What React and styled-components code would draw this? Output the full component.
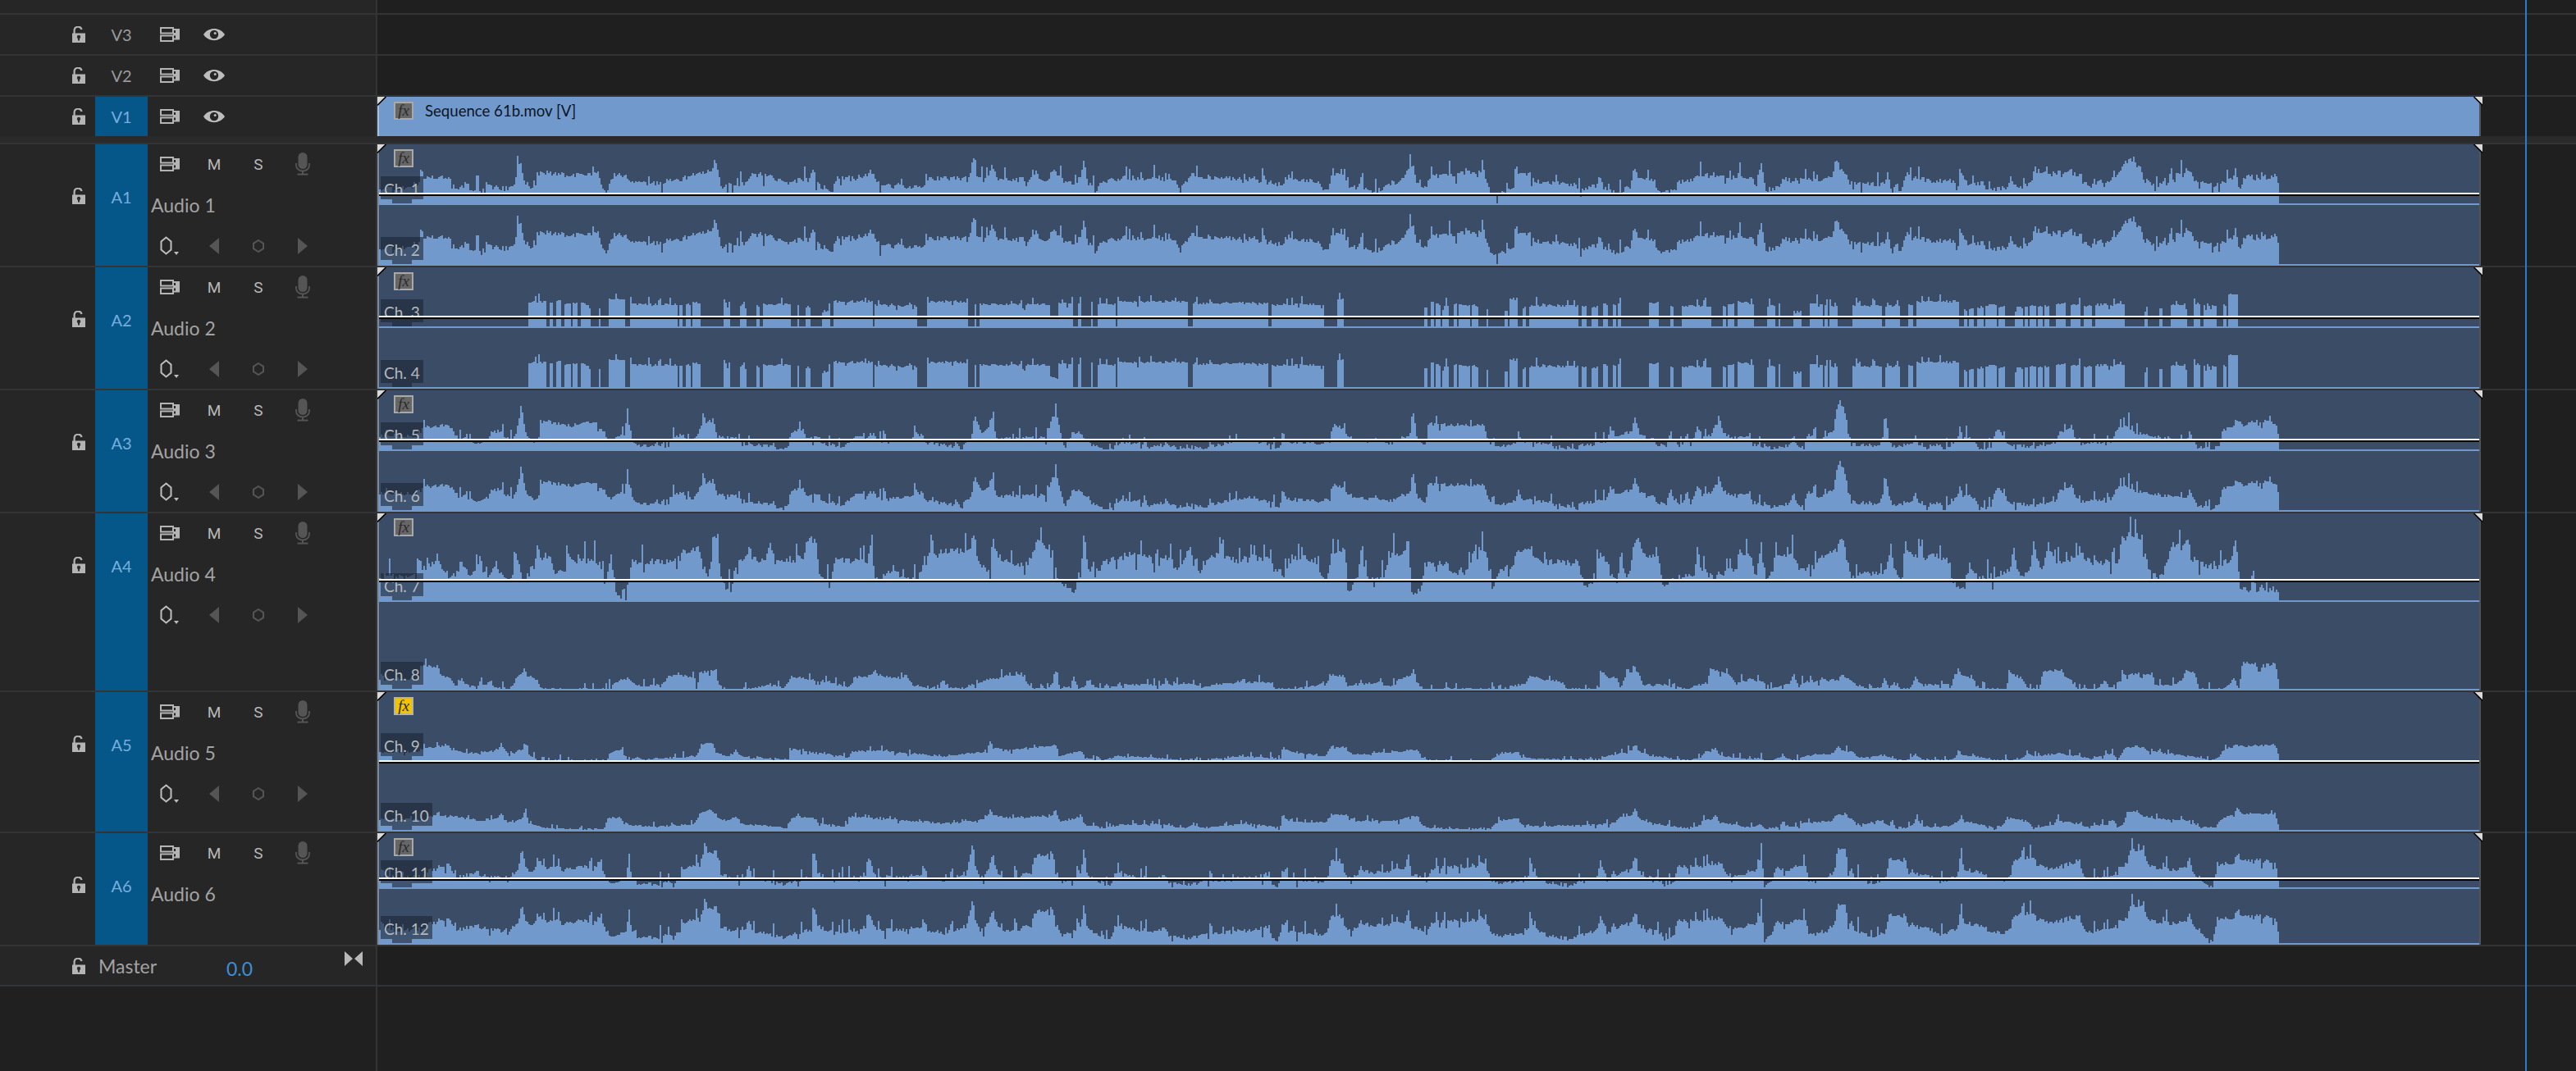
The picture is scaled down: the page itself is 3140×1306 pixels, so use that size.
import styled, { createGlobalStyle } from "styled-components";

const GlobalStyle = createGlobalStyle`
  html, body {
    margin: 0;
    background: #202020;
  }
  * {
    box-sizing: border-box;
  }
`;

const CLIP_LEFT = 462;
const CLIP_WIDTH = 2560;
const WAVE_END = 2778 - CLIP_LEFT;

// anchors are read off the screenshot as x:y pairs, each string covers one stretch of the timeline
const parse = (x0, sx, sy, base, str) =>
  str
    .trim()
    .split(/\s+/)
    .map((p) => {
      const [xi, yi] = p.split(":").map(Number);
      return [x0 + xi / sx - CLIP_LEFT, (base - yi) / sy];
    });

// pulls every steep slope in towards its high end, so peaks come out narrow instead of wide humps
const sharpen = (pts) => {
  const out = [];
  pts.forEach((p, i) => {
    const next = pts[i + 1];
    out.push(p);
    if (!next) return;
    const gap = next[0] - p[0];
    const diff = next[1] - p[1];
    if (Math.abs(diff) > 7 && gap > 9) {
      if (diff > 0) out.push([next[0] - 4, p[1] + diff * 0.3]);
      else out.push([p[0] + 4, next[1] - diff * 0.3]);
    }
  });
  return out;
};

const envelope = (pts) => (x) => {
  if (x <= pts[0][0]) return pts[0][1];
  for (let i = 1; i < pts.length; i++) {
    if (x <= pts[i][0]) {
      const [x0, h0] = pts[i - 1];
      const [x1, h1] = pts[i];
      if (x1 === x0) return h1;
      return h0 + ((h1 - h0) * (x - x0)) / (x1 - x0);
    }
  }
  return pts[pts.length - 1][1];
};

const gated = (x0s) => {
  const blocks = x0s.flatMap(([x0, str]) =>
    str
      .trim()
      .split(/\s+/)
      .map((b) => {
        const [range, top] = b.split(":");
        const [a, c] = range.split("-").map(Number);
        return [x0 + a / 1.96 - CLIP_LEFT, x0 + c / 1.96 - CLIP_LEFT, (912 - Number(top)) / 3];
      })
  );
  return (x) => {
    const hit = blocks.find((b) => x >= b[0] && x < b[1]);
    return hit ? hit[2] : 0;
  };
};

const wavePath = (env, { height, jitter, seed, shape = (h) => h, gate = false }) => {
  let s = seed;
  const rnd = () => {
    s = (s * 1664525 + 1013904223) % 4294967296;
    return s / 4294967296;
  };
  let d = `M0 ${height}`;
  for (let x = 0; x < WAVE_END; x += 2) {
    const base = env(x);
    let n = (rnd() - 0.5) * jitter;
    const a = rnd();
    const b = rnd();
    if (a < 0.11) n += b * jitter * 3;
    else if (a < 0.17) n -= b * jitter * 2;
    let h = base <= 0 && gate ? 2 : Math.max(2, Math.round(shape(base) + n));
    h = Math.min(h, height - 4);
    d += `V${height - h}H${x + 2}`;
  }
  d += `V${height - 2}H${CLIP_WIDTH}V${height}Z`;
  return d;
};

const A1_PTS = [
  ...parse(450, 1.96, 3, 462, "18:396 112:396 120:360 190:355 205:400 230:370 240:400 280:375 330:400 345:380 360:295 385:400 400:345 420:340 480:350 545:345 565:410 580:345 610:350 625:375 680:380 740:365 790:345 825:290 840:390 910:350 955:345 1000:375 1060:325 1105:410 1115:360 1195:330 1210:370 1310:395 1330:365 1430:360 1442:290 1465:370 1485:310 1500:370 1560:365"),
  ...parse(1250, 1.96, 3, 462, "0:380 20:315 45:370 65:315 90:370 120:385 138:290 165:410 180:375 230:360 355:365 360:390 390:350 465:360 545:365 610:385 625:365 700:375 720:410 730:345 760:340 770:405 800:360 820:410 860:385 910:320 925:320 945:395 965:355 1095:335 1122:425 1170:345 1205:345 1230:375 1310:385 1330:405 1370:340 1412:420 1452:312 1500:370 1520:415 1560:365"),
  ...parse(2050, 1.96, 3, 462, "0:375 35:345 100:360 170:360 175:405 188:300 200:405 240:365 340:370 370:290 390:350 400:380 470:385 490:345 520:415 535:340 600:370 640:370 660:390 663:325 680:385 720:375 725:410 785:350 815:395 840:335 870:335 950:350 960:385 1020:370 1050:310 1070:290 1095:320 1150:390 1170:350 1210:330 1230:370 1270:385 1320:320 1332:410 1340:355 1420:360 1427:400"),
];

const A2_ENV = gated([
  [450, "378-422:815 428-438:815 443-455:815 466-480:820 486-497:820 502-510:820 513-528:825 545-550:840 572-610:805 623-735:825 740-748:825 755-765:825 770-790:820 843-860:835 883-900:820 925-932:830 937-1007:825 1020-1027:825 1040-1052:835 1080-1095:850 1095-1098:820 1108-1200:815 1207-1307:830 1330-1427:815 1443-1450:825 1455-1568:825"],
  [1250, "0-55:825 55-75:870 75-113:820 123-132:825 155-160:820 170-213:825 216-388:815 396-580:820 585-612:828 615-713:825 742-760:805 950-958:835 965-975:820 980-990:825 995-1010:828 1020-1030:825 1033-1060:828 1065-1080:830 1098-1105:840 1142-1150:848 1155-1175:805 1187-1192:838 1203-1320:830 1328-1340:830 1350-1365:835 1378-1390:825 1402-1410:825 1415-1422:825 1487-1510:820 1537-1547:835"],
  [2050, "0-67:830 95-105:830 108-125:825 133-170:820 200-220:830 228-235:822 265-285:850 303-322:820 325-335:825 340-345:825 352-372:830 405-478:830 483-520:830 538-552:825 560-660:815 672-680:845 685-695:842 702-718:835 725-750:828 755-770:835 793-812:835 817-827:830 830-843:830 850-860:830 865-878:830 890-915:822 928-950:828 957-980:830 985-1057:825 1102-1112:838 1137-1148:842 1167-1207:825 1222-1235:822 1245-1275:830 1290-1298:830 1305-1325:790"],
]);

const A3_PTS = [
  ...parse(450, 1.96, 3, 1362, "18:1296 112:1296 120:1270 190:1265 205:1290 255:1320 290:1285 315:1280 340:1310 360:1195 385:1310 400:1320 410:1255 480:1265 540:1255 560:1280 570:1315 615:1240 625:1310 650:1335 690:1330 720:1305 745:1290 760:1320 790:1265 820:1248 830:1300 880:1305 900:1325 960:1335 975:1345 1000:1335 1005:1285 1035:1275 1075:1305 1130:1335 1155:1295 1205:1290 1225:1320 1280:1310 1320:1290 1380:1335 1410:1335 1445:1225 1460:1290 1485:1235 1500:1310 1560:1300"),
  ...parse(1250, 1.96, 3, 1362, "0:1295 50:1305 65:1220 75:1240 90:1335 110:1285 150:1305 175:1345 208:1350 215:1320 270:1320 290:1340 335:1310 365:1345 390:1320 420:1345 470:1325 540:1310 590:1330 605:1355 613:1275 620:1315 700:1325 735:1262 760:1275 775:1310 880:1320 925:1220 955:1335 960:1262 1095:1265 1122:1340 1175:1290 1225:1325 1300:1340 1395:1265 1410:1300 1455:1232 1500:1310 1530:1335 1540:1280 1560:1330"),
  ...parse(2050, 1.96, 3, 1362, "0:1335 10:1280 20:1335 35:1262 45:1300 75:1270 90:1250 130:1305 160:1290 210:1345 265:1295 280:1350 300:1290 330:1310 370:1190 385:1200 400:1300 420:1330 470:1330 487:1255 500:1340 555:1290 580:1335 640:1330 663:1265 700:1310 735:1350 750:1275 770:1295 830:1340 900:1285 930:1262 950:1325 1035:1275 1065:1250 1140:1300 1220:1310 1270:1350 1290:1280 1323:1245 1340:1262 1390:1250 1420:1270 1427:1355"),
];

const CH7_PTS = [
  ...parse(450, 1.568, 2.9, 330, "18:240 88:240 90:175 100:210 130:155 155:240 175:180 190:235 210:170 225:245 240:175 265:250 280:160 290:250 305:230 320:135 345:175 372:235 380:160 440:190 450:280 460:145 475:310 500:190 580:185 600:150 630:140 645:235 660:85 672:250 690:290 700:190 725:140 745:190 765:125 800:190 835:115 852:110 880:275 890:160 950:190 958:105 965:250 1000:190 1045:250 1060:175 1090:150 1145:150 1155:85 1185:225 1190:95 1215:190 1250:200 1275:95 1300:140 1345:290 1365:85 1385:250 1400:185 1440:160 1530:175 1540:215 1560:160"),
  ...parse(1450, 2.24, 2.9, 330, "0:145 30:225 50:180 80:160 140:185 175:160 220:185 250:225 260:250 270:170 340:180 375:250 385:170 420:125 428:290 465:145 485:250 530:250 540:170 595:105 605:295 630:295 640:200 700:175 715:240 770:155 805:140 825:290 840:225 890:145 930:135 960:190 1060:190 1090:275 1118:140 1140:190 1165:260 1175:155 1190:250 1212:110 1225:115 1280:180 1290:265 1385:140 1430:240 1500:145 1530:170 1545:250 1558:95"),
  ...parse(2150, 2.24, 2.9, 330, "0:250 30:160 75:155 95:215 150:170 205:110 220:125 235:240 320:225 345:130 375:250 385:125 430:170 500:170 545:290 560:190 600:250 680:130 705:250 735:110 760:215 775:115 800:190 860:135 880:195 940:170 945:220 975:110 1000:90 1030:100 1050:215 1090:245 1110:130 1160:115 1220:205 1285:115 1294:170 1296:300 1302:285 1400:285 1407:290"),
];

const CH8_PTS = [
  ...parse(450, 1.568, 2.9, 640, "18:600 95:600 97:550 110:555 130:555 155:600 165:630 175:595 190:625 230:600 260:635 280:590 295:560 320:600 327:635 455:635 456:575 460:635 470:610 495:595 520:625 555:620 570:585 615:590 625:635 630:575 660:570 680:635 730:635 765:615 790:630 805:590 875:610 920:630 925:595 965:565 1000:595 1030:595 1075:630 1095:600 1130:635 1150:620 1185:600 1250:580 1270:635 1295:635 1310:570 1320:635 1345:590 1355:635 1375:595 1395:635 1430:620 1500:620 1560:615"),
  ...parse(1450, 2.24, 2.9, 640, "0:615 30:630 130:610 225:610 230:635 300:630 350:620 385:585 420:590 430:620 520:595 530:625 570:600 610:565 640:635 840:635 845:605 850:635 880:625 925:590 1020:610 1025:635 1115:635 1120:570 1165:595 1175:635 1190:580 1225:575 1235:620 1295:620 1350:635 1420:565 1470:580 1490:615 1530:600 1560:610"),
  ...parse(2150, 2.24, 2.9, 640, "0:615 5:635 50:625 80:575 95:635 100:610 210:580 240:605 275:630 320:630 325:590 340:630 360:605 370:635 395:635 412:595 440:620 510:620 530:560 570:600 610:635 660:635 668:565 700:595 720:635 750:635 760:575 810:565 835:600 855:635 910:635 930:600 960:635 975:585 1060:580 1065:620 1110:620 1150:570 1175:580 1185:635 1240:635 1280:590 1295:635 1305:540 1340:545 1350:575 1365:545 1395:545 1407:635"),
];

const CH9_PTS = [
  ...parse(450, 1.568, 2.9, 890, "18:855 95:855 97:845 150:830 205:860 250:825 262:860 297:820 325:885 455:885 458:860 480:845 520:880 625:870 632:830 655:820 680:870 700:845 730:875 800:880 805:845 880:865 915:875 920:855 965:850 1040:860 1100:870 1185:815 1220:850 1310:830 1320:870 1360:850 1400:885 1430:870 1500:875 1560:885"),
  ...parse(1450, 2.24, 2.9, 890, "0:880 30:885 130:870 225:875 245:885 252:840 290:860 370:870 385:835 425:840 450:865 560:855 620:845 650:885 820:885 840:860 895:855 950:880 1100:880 1170:860 1215:815 1250:865 1350:885 1400:860 1435:840 1530:880 1560:875"),
  ...parse(2150, 2.24, 2.9, 890, "0:885 50:860 95:885 100:870 190:860 200:830 240:855 260:875 325:865 380:885 410:860 430:880 500:885 530:845 600:875 620:885 715:860 750:870 800:860 860:870 890:880 950:860 965:885 985:840 1015:835 1060:855 1170:870 1220:885 1250:850 1290:830 1305:835 1395:830 1407:885"),
];

const CH10_PTS = [
  ...parse(450, 1.568, 2.9, 1143, "18:1100 105:1100 110:1090 150:1085 205:1105 250:1075 262:1110 297:1065 330:1130 445:1135 458:1095 480:1095 525:1125 625:1100 632:1075 655:1065 680:1105 700:1090 770:1125 800:1130 805:1095 850:1090 905:1125 920:1090 1040:1105 1100:1115 1185:1065 1220:1095 1310:1065 1320:1110 1360:1090 1400:1130 1430:1120 1500:1115 1560:1130"),
  ...parse(1450, 2.24, 2.9, 1143, "0:1120 40:1130 160:1115 245:1130 252:1080 290:1110 370:1110 385:1080 425:1085 450:1105 560:1105 620:1085 650:1130 820:1135 840:1105 895:1095 950:1125 1100:1120 1170:1095 1215:1060 1250:1110 1350:1130 1400:1105 1435:1080 1530:1125 1560:1120"),
  ...parse(2150, 2.24, 2.9, 1143, "0:1135 50:1105 95:1130 100:1115 195:1080 240:1100 260:1120 325:1100 380:1128 415:1095 440:1125 500:1125 535:1080 600:1120 620:1130 660:1095 720:1105 735:1130 800:1090 860:1115 880:1125 950:1100 965:1130 990:1075 1020:1070 1060:1095 1170:1105 1230:1130 1250:1095 1290:1060 1305:1080 1395:1080 1407:1135"),
];

const A6_PTS = [
  ...parse(450, 1.568, 2.9, 1545, "18:1490 108:1490 113:1470 150:1445 165:1490 205:1465 265:1495 290:1400 305:1480 320:1440 345:1465 440:1440 455:1500 465:1525 495:1435 510:1515 550:1520 600:1465 635:1430 660:1395 680:1500 725:1450 790:1520 850:1425 890:1505 955:1430 970:1490 1030:1495 1060:1460 1100:1505 1150:1395 1170:1490 1190:1415 1215:1500 1270:1430 1305:1415 1325:1515 1365:1395 1410:1525 1425:1480 1500:1500 1520:1480 1560:1525"),
  ...parse(1450, 2.24, 2.9, 1545, "0:1520 85:1500 160:1495 215:1480 240:1530 252:1465 290:1505 360:1510 385:1440 415:1450 440:1500 465:1455 530:1480 595:1420 645:1505 660:1465 805:1435 830:1510 855:1515 930:1440 970:1510 1030:1525 1118:1435 1140:1490 1215:1420 1280:1500 1300:1530 1330:1460 1380:1460 1450:1450 1490:1490 1560:1405"),
  ...parse(2150, 2.24, 2.9, 1545, "0:1530 30:1460 60:1470 110:1455 140:1510 200:1400 220:1405 260:1500 300:1520 340:1445 385:1440 450:1490 480:1510 535:1430 600:1480 650:1505 680:1440 735:1430 780:1465 860:1445 885:1500 960:1470 1000:1400 1030:1410 1050:1460 1130:1470 1160:1430 1195:1500 1225:1530 1235:1455 1290:1430 1300:1445 1395:1445 1407:1540"),
];

// upper channels of A3 and A6 are quieter in the mid range
const shaved = (h) => h * (0.55 + 0.45 * Math.min(1, h / 35));
const fine = (pts) => envelope(sharpen(pts));

const audioTracks = [
  {
    id: "A1", name: "Audio 1", height: 148, band: 59, hasKeys: true,
    channels: [
      { label: "Ch. 1", d: wavePath(fine(A1_PTS), { height: 74, jitter: 6, seed: 11, shape: (h) => h - 1 }) },
      { label: "Ch. 2", d: wavePath(fine(A1_PTS), { height: 74, jitter: 6, seed: 11 }) },
    ],
  },
  {
    id: "A2", name: "Audio 2", height: 148, band: 59, hasKeys: true,
    channels: [
      { label: "Ch. 3", d: wavePath(A2_ENV, { height: 74, jitter: 3, seed: 23, gate: true }) },
      { label: "Ch. 4", d: wavePath(A2_ENV, { height: 74, jitter: 3, seed: 23, gate: true }) },
    ],
  },
  {
    id: "A3", name: "Audio 3", height: 148, band: 59, hasKeys: true,
    channels: [
      { label: "Ch. 5", d: wavePath(fine(A3_PTS), { height: 74, jitter: 4.5, seed: 37, shape: shaved }) },
      { label: "Ch. 6", d: wavePath(fine(A3_PTS), { height: 74, jitter: 4.5, seed: 37 }) },
    ],
  },
  {
    id: "A4", name: "Audio 4", height: 216, band: 80, hasKeys: true,
    channels: [
      { label: "Ch. 7", d: wavePath(fine(CH7_PTS), { height: 108, jitter: 8, seed: 41 }) },
      { label: "Ch. 8", d: wavePath(fine(CH8_PTS), { height: 108, jitter: 3, seed: 43 }) },
    ],
  },
  {
    id: "A5", name: "Audio 5", height: 170, band: 83, hasKeys: true, fxOn: true,
    channels: [
      { label: "Ch. 9", d: wavePath(fine(CH9_PTS), { height: 85, jitter: 2.2, seed: 53 }) },
      { label: "Ch. 10", d: wavePath(fine(CH10_PTS), { height: 85, jitter: 2.2, seed: 59 }) },
    ],
  },
  {
    id: "A6", name: "Audio 6", height: 136, band: 54,
    channels: [
      { label: "Ch. 11", d: wavePath(fine(A6_PTS), { height: 68, jitter: 5, seed: 67, shape: shaved }) },
      { label: "Ch. 12", d: wavePath(fine(A6_PTS), { height: 68, jitter: 5, seed: 67 }) },
    ],
  },
];

const Page = styled.div`
  position: relative;
  width: 3140px;
  height: 1306px;
  overflow: hidden;
  background: #202020;
  font-family: Lato, "Open Sans", sans-serif;
`;

const Playhead = styled.div`
  position: absolute;
  top: 0;
  bottom: 0;
  left: 3078px;
  width: 2px;
  background: #2b7bd0;
`;

const Row = styled.div`
  display: flex;
  height: ${(p) => p.$height}px;
  flex: none;
  box-sizing: content-box;
  border-bottom: ${(p) => (p.$noLine ? "none" : "2px solid #333436")};
`;

const Filler = styled.div`
  display: flex;
  height: 200px;
`;

const Header = styled.div`
  display: flex;
  width: 460px;
  flex: none;
  overflow: hidden;
  border-right: 2px solid #333436;
  background: ${(p) => p.$bg || "#262626"};
`;

const Lane = styled.div`
  flex: 1;
  background: #1f1f1f;
`;

const GapRow = styled(Row)`
  background: #2a2a2a;
`;

const LockSlot = styled.div`
  display: flex;
  align-items: center;
  width: 116px;
  height: ${(p) => (p.$tall ? "126px" : "100%")};
  padding-left: 88px;
  flex: none;
`;

const Target = styled.div`
  width: 64px;
  flex: none;
  text-align: center;
  color: ${(p) => (p.$active ? "#78aedb" : "#9a9a9a")};
  background: ${(p) => (p.$active ? "#05578a" : "transparent")};
  font-size: 20px;
  line-height: ${(p) => p.$line}px;
`;

const Controls = styled.div`
  display: flex;
  align-items: center;
  height: ${(p) => p.$height || 48}px;
`;

const ControlStack = styled.div`
  display: grid;
  grid-template-rows: 48px 52px 48px;
  align-content: start;
`;

const Slot = styled.div`
  display: flex;
  align-items: center;
  justify-content: center;
  width: 54px;
  color: #b8b8b8;
  font-family: Roboto, sans-serif;
  font-size: 19px;
`;

const TrackName = styled.div`
  display: flex;
  align-items: center;
  padding-left: 4px;
  color: #a3a3a3;
  font-size: 23px;
`;

const MasterName = styled.div`
  display: flex;
  align-items: center;
  width: 156px;
  margin-left: 4px;
  color: #a3a3a3;
  font-size: 23px;
`;

const MasterValue = styled.div`
  display: flex;
  align-items: center;
  padding-top: 6px;
  color: #3d8fd6;
  font-size: 23px;
`;

const BowtieSlot = styled.div`
  margin-left: auto;
  padding: 6px 16px 0 0;
`;

const Clip = styled.div`
  position: relative;
  display: flex;
  flex-direction: column;
  width: ${CLIP_WIDTH + 4}px;
  height: 100%;
  background: ${(p) => p.$bg};
  border-left: 2px solid ${(p) => p.$edge};
  border-right: 2px solid #50555c;
`;

const VideoClip = styled(Clip)`
  flex-direction: row;
  align-items: center;
  padding: 0 0 14px 56px;
  color: #0b1526;
  font-size: 18.6px;
`;

const Corner = styled.svg`
  position: absolute;
  top: 0;
  ${(p) => (p.$right ? "right: -4px; transform: scaleX(-1);" : "left: -2px;")}
`;

const FxBadge = styled.div`
  position: absolute;
  top: 6px;
  left: 18px;
  width: 24px;
  height: 22px;
  border: 2px solid ${(p) => (p.$on ? "#b8b39a" : "#a8a8a8")};
  background: ${(p) => (p.$on ? "#f2c400" : "#666666")};
  color: #2a2a2a;
  font-family: "Liberation Serif", serif;
  font-style: italic;
  font-size: 19px;
  line-height: 17px;
  text-align: center;
`;

const Channel = styled.div`
  position: relative;
  flex: 1;
  svg {
    display: block;
  }
`;

const ChannelLabel = styled.div`
  position: absolute;
  left: 2px;
  bottom: 7px;
  height: 28px;
  padding: 0 4px;
  background: rgba(28, 38, 52, 0.6);
  color: #b4b8bd;
  font-size: 19px;
  line-height: 31px;
  &::after {
    content: "";
    position: absolute;
    top: 100%;
    left: 14px;
    width: 24px;
    height: 5px;
    background: rgba(28, 38, 52, 0.6);
  }
`;

const RubberBand = styled.div`
  position: absolute;
  left: 0;
  right: 0;
  top: ${(p) => p.$top}px;
  height: 4px;
  border-top: 2px solid #ffffff;
  border-bottom: 2px solid #000000;
`;

const LockIcon = () => (
  <svg width="16" height="20" viewBox="0 0 16 20">
    <path d="M2.6 9V5.2a4.6 4.6 0 0 1 9-1.2" fill="none" stroke="#b4b4b4" strokeWidth="2.2" />
    <rect x="0" y="8.5" width="16" height="11.5" fill="#b4b4b4" />
    <circle cx="8" cy="13" r="2.2" fill="#2b2b2b" />
    <rect x="7" y="13" width="2" height="4.5" fill="#2b2b2b" />
  </svg>
);

const SyncIcon = () => (
  <svg width="24" height="18" viewBox="0 0 24 18">
    <rect x="1" y="1" width="15" height="6.5" fill="none" stroke="#b4b4b4" strokeWidth="2" />
    <rect x="1" y="10.5" width="15" height="6.5" fill="none" stroke="#b4b4b4" strokeWidth="2" />
    <path d="M16 2h8v13.5h-8v-2h3V4h-3z" fill="#b4b4b4" />
    <rect x="16" y="7" width="4" height="3.5" fill="#b4b4b4" />
  </svg>
);

const EyeIcon = () => (
  <svg width="26" height="16" viewBox="0 0 26 16">
    <path d="M0 8C6 -1.5 20 -1.5 26 8C20 17.5 6 17.5 0 8Z" fill="#bdbdbd" />
    <circle cx="13" cy="8" r="5.2" fill="#262626" />
    <circle cx="14.2" cy="6.6" r="1.5" fill="#bdbdbd" />
  </svg>
);

const MicIcon = () => (
  <svg width="18" height="28" viewBox="0 0 18 28">
    <rect x="3.5" y="0" width="11" height="20" rx="5.5" fill="#555555" />
    <path d="M1 13v2.5a8 7 0 0 0 16 0V13" fill="none" stroke="#555555" strokeWidth="1.8" />
    <rect x="8" y="22" width="2" height="4" fill="#555555" />
    <rect x="2.5" y="25.6" width="13" height="2" fill="#555555" />
  </svg>
);

const KeyframeIcon = () => (
  <svg width="24" height="24" viewBox="0 0 24 24">
    <path d="M7.5 1.5L13.5 6.5V16.5L7.5 21.5L1.5 16.5V6.5Z" fill="none" stroke="#bdbdbd" strokeWidth="2" />
    <path d="M17 19h6l-3 4z" fill="#bdbdbd" />
  </svg>
);

const PrevIcon = () => (
  <svg width="12" height="20" viewBox="0 0 12 20">
    <path d="M12 0V20L0 10Z" fill="#555555" />
  </svg>
);

const NextIcon = () => (
  <svg width="12" height="20" viewBox="0 0 12 20">
    <path d="M0 0V20L12 10Z" fill="#555555" />
  </svg>
);

const AddKeyIcon = () => (
  <svg width="14" height="16" viewBox="0 0 14 16">
    <path d="M7 1L13 4.8V11.2L7 15L1 11.2V4.8Z" fill="none" stroke="#555555" strokeWidth="2" />
  </svg>
);

const BowtieIcon = () => (
  <svg width="22" height="18" viewBox="0 0 22 18">
    <path d="M0 0L10 9L0 18ZM22 0L12 9L22 18Z" fill="#b8b8b8" />
  </svg>
);

const CornerMark = ({ right }) => (
  <Corner $right={right} width="12" height="12" viewBox="0 0 12 12">
    <path d="M0 0H10L0 10Z" fill="#d9d9d9" />
    <path d="M10.5 0L0 10.5" stroke="#000000" strokeWidth="1.6" />
  </Corner>
);

function VideoRow({ id, active, clip }) {
  return (
    <Row $height={48} $noLine={clip}>
      <Header>
        <LockSlot><LockIcon /></LockSlot>
        <Target $active={active} $line={48}>{id}</Target>
        <Controls>
          <Slot><SyncIcon /></Slot>
          <Slot><EyeIcon /></Slot>
        </Controls>
      </Header>
      <Lane>
        {clip && (
          <VideoClip $bg="#7199cc" $edge="#a9c0dd">
            <CornerMark />
            <CornerMark right />
            <FxBadge>fx</FxBadge>
            {clip}
          </VideoClip>
        )}
      </Lane>
    </Row>
  );
}

function AudioRow({ track }) {
  return (
    <Row $height={track.height}>
      <Header>
        <LockSlot $tall><LockIcon /></LockSlot>
        <Target $active $line={128}>{track.id}</Target>
        <ControlStack>
          <Controls>
            <Slot><SyncIcon /></Slot>
            <Slot>M</Slot>
            <Slot>S</Slot>
            <Slot><MicIcon /></Slot>
          </Controls>
          <TrackName>{track.name}</TrackName>
          {track.hasKeys && (
            <Controls>
              <Slot><KeyframeIcon /></Slot>
              <Slot><PrevIcon /></Slot>
              <Slot><AddKeyIcon /></Slot>
              <Slot><NextIcon /></Slot>
            </Controls>
          )}
        </ControlStack>
      </Header>
      <Lane>
        <Clip $bg="#3b4d66" $edge="#7e8a9a">
          {track.channels.map((c) => (
            <Channel key={c.label}>
              <svg width={CLIP_WIDTH} height={track.height / 2}>
                <path d={c.d} fill="#7199cc" />
              </svg>
              <ChannelLabel>{c.label}</ChannelLabel>
            </Channel>
          ))}
          <RubberBand $top={track.band} />
          <CornerMark />
          <CornerMark right />
          <FxBadge $on={track.fxOn}>fx</FxBadge>
        </Clip>
      </Lane>
    </Row>
  );
}

export default function App() {
  return (
    <Page>
      <GlobalStyle />
      <Row $height={16}>
        <Header />
        <Lane />
      </Row>
      <VideoRow id="V3" />
      <VideoRow id="V2" />
      <VideoRow id="V1" active clip="Sequence 61b.mov [V]" />
      <GapRow $height={8} />
      {audioTracks.map((t) => (
        <AudioRow key={t.id} track={t} />
      ))}
      <Row $height={47}>
        <Header>
          <LockSlot><LockIcon /></LockSlot>
          <MasterName>Master</MasterName>
          <MasterValue>0.0</MasterValue>
          <BowtieSlot><BowtieIcon /></BowtieSlot>
        </Header>
        <Lane />
      </Row>
      <Filler>
        <Header $bg="#202020" />
      </Filler>
      <Playhead />
    </Page>
  );
}
